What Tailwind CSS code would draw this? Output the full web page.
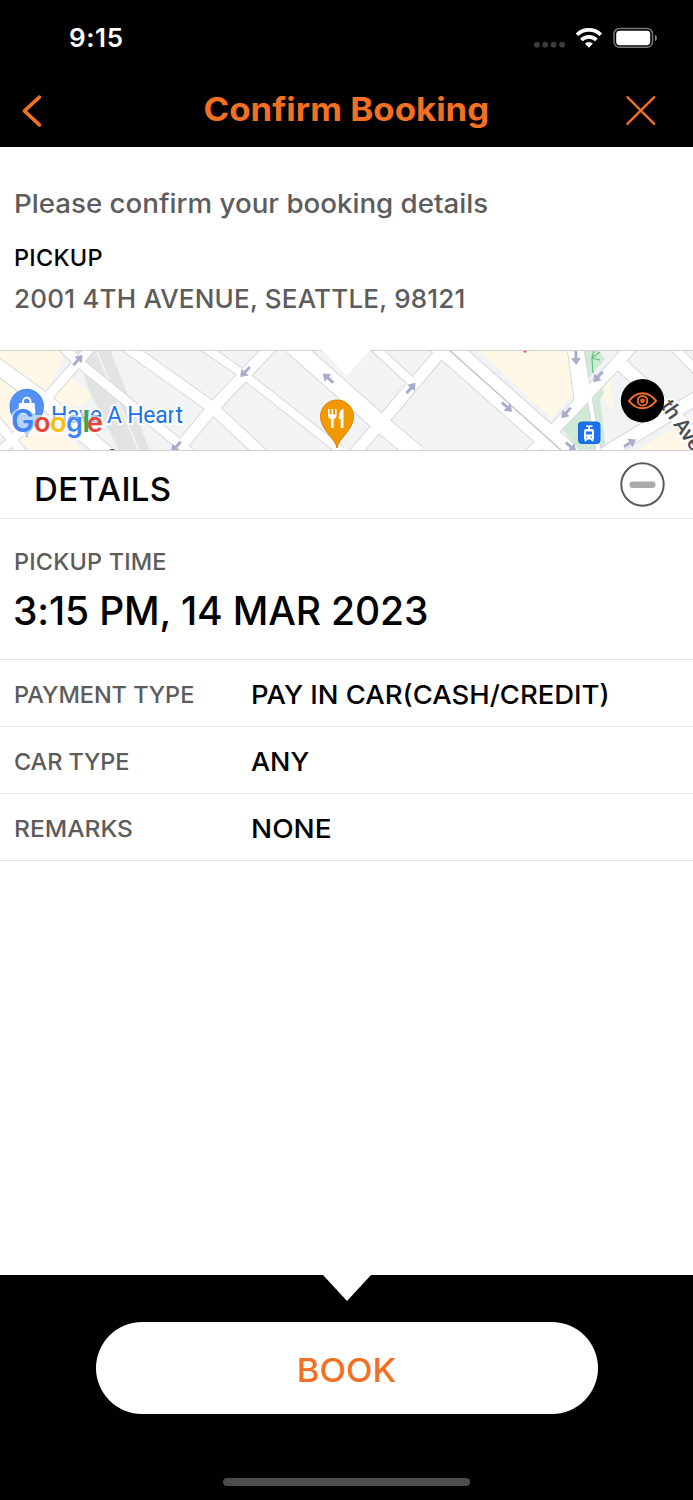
<!DOCTYPE html>
<html lang="en">
<head>
<meta charset="utf-8">
<title>Confirm Booking</title>
<script src="https://cdn.jsdelivr.net/npm/@tailwindcss/browser@4"></script>
</head>
<body class="bg-white">
<main class="flex h-[1500px] w-[693px] flex-col overflow-hidden bg-white font-['Inter',sans-serif] font-medium text-black">
  <header class="flex h-[147px] shrink-0 flex-col bg-black">
    <div class="flex h-[76px] items-center justify-between pl-[69px] pr-[35px]">
      <span class="text-[26px] leading-none font-semibold tracking-[0.6px] text-white">9:15</span>
      <svg width="124" height="24" viewBox="534 26 124 24">
        <g fill="#3d3d3d"><rect x="534" y="42" width="5.6" height="5.6" rx="2"/><rect x="542.4" y="42" width="5.6" height="5.6" rx="2"/><rect x="550.8" y="42" width="5.6" height="5.6" rx="2"/><rect x="559.2" y="42" width="5.6" height="5.6" rx="2"/></g>
        <g fill="none" stroke="#fff" stroke-width="3.7"><path d="M577 34.8a16.8 16.8 0 0 1 23.8 0"/><path d="M581.4 40a10.5 10.5 0 0 1 15 0"/></g>
        <path d="M588.9 47.8l-4-4.2a5.9 5.9 0 0 1 8 0z" fill="#fff"/>
        <rect x="614" y="28.5" width="38.5" height="18.8" rx="5.5" fill="none" stroke="#757575" stroke-width="1.5"/>
        <rect x="616.2" y="30.8" width="34" height="14.4" rx="3.4" fill="#fff"/>
        <path d="M655 34.8c2.6 1 2.6 5.4 0 6.4z" fill="#858585"/>
      </svg>
    </div>
    <div class="flex h-[68px] items-center justify-between pl-[20px] pr-[35px]">
      <svg width="24" height="36" viewBox="20 92 24 36" fill="none" stroke="#f36f21" stroke-width="3.6" stroke-linecap="round" stroke-linejoin="round"><path d="M39.4 97.1L24.4 110.9l15 14"/></svg>
      <h1 class="ml-[25px] scale-x-[1.088] pb-px text-[32px] leading-none font-bold text-[#f36f21]">Confirm Booking</h1>
      <svg width="34" height="34" viewBox="624 94 34 34" stroke="#f36f21" stroke-width="2.3" stroke-linecap="round"><path d="M627.4 98.1l26.8 26.8M654.2 98.1l-26.8 26.8"/></svg>
    </div>
  </header>

  <section class="flex h-[203px] shrink-0 flex-col px-[14px] pt-[41px]">
    <p class="h-[54px] origin-left scale-x-[1.065] text-[26px] leading-[32px] text-[#5c5c5c]">Please confirm your booking details</p>
    <h2 class="h-[41px] text-[23.5px] leading-[32px] tracking-[0.25px]">PICKUP</h2>
    <p class="text-[26px] leading-[32px] tracking-[0.2px] text-[#5c5c5c]">2001 4TH AVENUE, SEATTLE, 98121</p>
  </section>

  <section class="h-[101px] shrink-0">
    <svg width="693" height="101" viewBox="0 0 693 101">
      <rect width="693" height="101" fill="#f1f3f4"/>
      <g fill="#fff8e6"><path d="M0 0h66L45 46 0 12zM0 28l38 30L84 101H0zM52 38l16-13 25 20-13 12-29-6zM478 0h90l5 45-22 23zM611 28l2 30-13-13zM636 101l57-35v35z"/></g>
      <path fill="#f1f3f4" d="M0 83l12 18H0z"/>
      <path fill="#e2e3e3" d="M77 0h18l43 101h-19L88 38zM97 0h13l40 101h-10z"/>
      <path fill="#cfe9d6" d="M585 0h13l7 9-19 22zM561 78l30-33 1-13 13 10-5 7 6 52h-26z"/>
      <g fill="none" stroke="#d6d8dc">
        <g stroke-width="17"><path d="M-6 14L45 51 107 104"/></g>
        <g stroke-width="11"><path d="M45 50L92-4M62-4L77 11 167 84 190 103M-4 70L24 105M24 78L-2 104"/></g>
        <g stroke-width="13"><path d="M126-4L213 58 262 104M272-4L211 60 175 104M445-3L380 74 354 104M633-5L618 12 565 68 530 104"/></g>
        <g stroke-width="10"><path d="M200-6L243 24 341 101M374-3L413 33M673-4L697 21"/></g>
        <g stroke-width="19"><path d="M293-4L380 73 417 104"/></g>
        <g stroke-width="26"><path d="M437-10L458 8 569 106"/></g>
        <g stroke-width="15"><path d="M574-3L581 50M614 8L665 55 700 92M604 104L700 46"/></g>
        <path stroke-width="6" d="M581-2l18 105"/>
      </g>
      <g fill="none" stroke="#fff">
        <g stroke-width="15"><path d="M-6 14L45 51 107 104"/></g>
        <g stroke-width="9"><path d="M45 50L92-4M62-4L77 11 167 84 190 103M-4 70L24 105M24 78L-2 104"/></g>
        <g stroke-width="11"><path d="M126-4L213 58 262 104M272-4L211 60 175 104M445-3L380 74 354 104M633-5L618 12 565 68 530 104"/></g>
        <g stroke-width="8"><path d="M200-6L243 24 341 101M374-3L413 33M673-4L697 21"/></g>
        <g stroke-width="17"><path d="M293-4L380 73 417 104"/></g>
        <g stroke-width="24"><path d="M437-10L458 8 569 106"/></g>
        <g stroke-width="13"><path d="M574-3L581 50M614 8L665 55 700 92M604 104L700 46"/></g>
        <path stroke-width="4" d="M581-2l18 105"/>
      </g>
      <path d="M447-2L562 101" stroke="#bfc2c6" stroke-width="1.4"/>
      <path d="M600 2l-8 6 1 15M592 8l8 2M594 0l-2 8" fill="none" stroke="#5fc27e" stroke-width="1.2"/>
      <defs><path id="arrow" d="M-7-1.5H0V-5L7 0 0 5V1.5h-7z" fill="#a9adcc"/></defs>
      <use href="#arrow" transform="translate(78 10) rotate(-49)"/>
      <use href="#arrow" transform="translate(176 97) rotate(131)"/>
      <use href="#arrow" transform="translate(245 22) rotate(134)"/>
      <use href="#arrow" transform="translate(328 28) rotate(-139)"/>
      <use href="#arrow" transform="translate(411 38) rotate(-49)"/>
      <use href="#arrow" transform="translate(507 57) rotate(42)"/>
      <use href="#arrow" transform="translate(576 8) rotate(88)"/>
      <use href="#arrow" transform="translate(598 27) rotate(132)"/>
      <use href="#arrow" transform="translate(566 63) rotate(132)"/>
      <use href="#arrow" transform="translate(571 97) rotate(42)"/>
      <use href="#arrow" transform="translate(630 93) rotate(-31)"/>
      <path d="M322 0h48L346.5 26z" fill="#fff"/>
      <path d="M523.5 0h3v2.500h-3z" fill="#ee4470"/>
      <!-- restaurant pin -->
      <path d="M337 98c-1.600-10-16.500-18-16.500-31.500a16.500 16.500 0 0 1 33 0C353.500 80 338.600 88 337 98z" fill="#f29900" stroke="#e37c00"/>
      <path d="M328 59v6q0 3.500 2.900 4V78h2.800v-9q2.900-.5 2.900-4v-6h-1.600v5.500h-1.900V59h-1.600v5.500h-1.900V59zM343.500 58.500V78h-2.800v-9h-2q0-9 4.800-10.500z" fill="#fff"/>
      <!-- tram stop -->
      <rect x="578.5" y="72" width="21.5" height="21.5" rx="3" fill="#1a73e8" stroke="#1967d2"/>
      <path d="M586 75.500h6.500v1.400h-2.500v2h3l1 2v8.500h-1.500l1.500 1.800h-2l-1.500-1.800h-3l-1.500 1.800h-2l1.500-1.800H584V81l1-2h3v-2h-2zM586 81.500v3h6v-3zM586 86.500v1.300h1.300v-1.300zM590.700 86.500v1.300h1.300v-1.300z" fill="#fff" fill-rule="evenodd"/>
      <!-- shop pin -->
      <path d="M26.700 87c-.5-8-16.700-14-16.700-31a16.700 16.700 0 0 1 33.400 0c0 17-15.700 23-16.700 31z" fill="#5491f5" stroke="#4384ee"/>
      <path d="M19 53h15.500l1 10.500H18z" fill="#fff"/><path d="M23 54v-2.500a3.800 3.800 0 0 1 7.600 0V54" fill="none" stroke="#fff" stroke-width="1.800"/>
      <text x="51" y="73" textLength="132" font-family="Roboto" font-weight="400" font-size="23" fill="#1a73e8" stroke="#fff" stroke-width="4" stroke-linejoin="round" paint-order="stroke">Have A Heart</text>
      <!-- Google watermark -->
      <path d="M23.500 57.500a13.500 13.500 0 0 1 12 7.500H81v-7h9v7h4q11 1 11 10t-11 9H84q-1 7-10 7t-10-7H35q-4 2-11.500 2a14 14 0 0 1 0-28.500z" fill="#fff" fill-opacity=".6"/>
      <text y="81.500" x="11 34 50 66 82.300 87" font-family="Inter" font-weight="600"><tspan fill="#4285f4" font-size="31">G</tspan><tspan fill="#ea4335" font-size="27">o</tspan><tspan fill="#fbbc05" font-size="27">o</tspan><tspan fill="#4285f4" font-size="27">g</tspan><tspan fill="#34a853" font-size="30">l</tspan><tspan fill="#ea4335" font-size="27">e</tspan></text>
      <path d="M110 101q2-2 5 0" stroke="#333" stroke-width="2" fill="none"/>
      <text transform="translate(660 56) rotate(55)" textLength="56" font-family="Roboto" font-size="21" fill="#4a4d52" stroke="#fff" stroke-width="3" paint-order="stroke">th Ave</text>
      <circle cx="642.5" cy="50.800" r="21.700" fill="#000"/>
      <g fill="none" stroke="#f36f21" stroke-width="1.900"><path d="M629 50.800Q635 43.300 642.500 43.300t13.500 7.500Q650 58.300 642.500 58.300t-13.500-7.500z"/><circle cx="642.5" cy="50.800" r="4.800"/><circle cx="642.5" cy="50.800" r="1.400"/></g>
      <path d="M0 .5h322M370 .5h323M0 100.500h693" stroke="#d0d0d0"/>
    </svg>
  </section>

  <section class="flex h-[68px] shrink-0 items-center justify-between border-b border-[#e3e3e3] pl-[34px] pr-[28px]">
    <h2 class="pt-[10px] text-[33px] leading-none tracking-[0.4px]">DETAILS</h2>
    <svg width="45" height="45" viewBox="0 0 45 45"><circle cx="22.5" cy="22.5" r="21.200" fill="#fff" stroke="#5a5a5a" stroke-width="2"/><rect x="9.500" y="19.500" width="26" height="6.500" rx="3" fill="#aaa"/></svg>
  </section>

  <section class="flex h-[141px] shrink-0 flex-col border-b border-[#e3e3e3] px-[13px] pt-[28px]">
    <h3 class="h-[44px] pl-px text-[23.5px] leading-[30px] tracking-[0.15px] text-[#5c5c5c]">PICKUP TIME</h3>
    <p class="text-[39px] leading-[40px] tracking-[-0.15px]">3:15 PM, 14 MAR 2023</p>
  </section>

  <dl class="flex flex-1 flex-col text-[26px]">
    <div class="flex h-[67px] items-center border-b border-[#e3e3e3] pl-[14px] pt-[3px]"><dt class="w-[237px] pt-px text-[23.5px] tracking-[-0.05px] text-[#5c5c5c]">PAYMENT TYPE</dt><dd class="origin-left scale-x-[1.055]">PAY IN CAR(CASH/CREDIT)</dd></div>
    <div class="flex h-[67px] items-center border-b border-[#e3e3e3] pl-[14px] pt-[3px]"><dt class="w-[237px] pt-px text-[23.5px] tracking-[-0.1px] text-[#5c5c5c]">CAR TYPE</dt><dd class="origin-left scale-x-[1.035]">ANY</dd></div>
    <div class="flex h-[67px] items-center border-b border-[#e3e3e3] pl-[14px] pt-[3px]"><dt class="w-[237px] origin-left scale-x-[1.045] pt-px text-[23.5px] text-[#5c5c5c]">REMARKS</dt><dd class="origin-left scale-x-[1.075]">NONE</dd></div>
  </dl>

  <footer class="flex h-[225px] shrink-0 flex-col items-center bg-black">
    <svg width="48" height="26" viewBox="0 0 48 26"><path d="M0 0h48L24 26z" fill="#fff"/></svg>
    <button class="mt-[21px] flex h-[92px] w-[502px] items-center justify-center rounded-full bg-white pt-1 text-[33px] leading-none text-[#f36f21]"><span class="scale-x-[1.05]">BOOK</span></button>
    <div class="mt-[64px] h-[8px] w-[247px] rounded-full bg-[#4d4d4d]"></div>
  </footer>
</main>
</body>
</html>
